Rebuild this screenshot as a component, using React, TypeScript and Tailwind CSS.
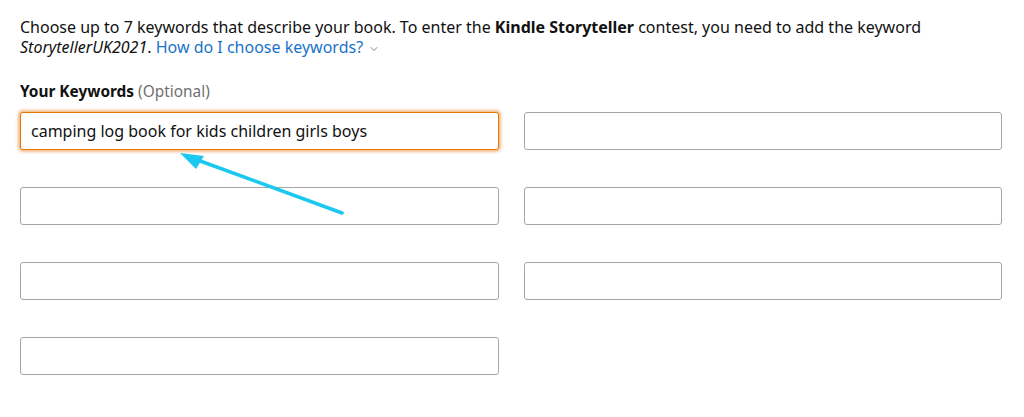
import { ChevronDown } from 'lucide-react';

const font = { fontFamily: '"Noto Sans", "Open Sans", Arial, sans-serif' };

function KeywordInput({ value, focused }: { value?: string; focused?: boolean }) {
  return (
    <input
      type="text"
      defaultValue={value}
      readOnly
      className={
        focused
          ? 'h-[38px] w-full rounded-[3px] border border-[#e77600] bg-white px-[10px] text-[16px] text-[#111] shadow-[0_0_3px_2px_rgba(228,121,17,0.5)] outline-none'
          : 'h-[38px] w-full rounded-[3px] border border-[#a6a6a6] bg-white px-[10px] text-[16px] text-[#111] outline-none'
      }
      style={font}
    />
  );
}

export default function App() {
  return (
    <div className="relative h-[417px] w-[1024px] overflow-hidden bg-white pl-[20px] pr-[22px] pt-[17px] text-[#111]" style={font}>
      <p className="text-[16px] leading-[20px]">
        Choose up to 7 keywords that describe your book. To enter the <b className="font-bold">Kindle Storyteller</b> contest, you
        need to add the keyword
        <br />
        <i>StorytellerUK2021</i>.{' '}
        <span className="text-[#1a73c8]">How do I choose keywords?</span>
        <ChevronDown size={12} strokeWidth={1.5} className="ml-[5px] inline-block align-middle text-[#555]" />
      </p>

      <div className="mt-[25px] mb-[10px] text-[15.4px] leading-[20px]">
        <span className="font-bold">Your Keywords</span> <span className="text-[#6f6f6f]">(Optional)</span>
      </div>

      <div className="grid grid-cols-2 gap-x-[25px] gap-y-[37px]">
        <KeywordInput value="camping log book for kids children girls boys" focused />
        <KeywordInput />
        <KeywordInput />
        <KeywordInput />
        <KeywordInput />
        <KeywordInput />
        <KeywordInput />
      </div>

      {/* annotation arrow drawn over the form */}
      <svg className="pointer-events-none absolute left-0 top-0" width="1024" height="417">
        <line x1="342" y1="213" x2="192" y2="158" stroke="#1ac8f0" strokeWidth="3.5" strokeLinecap="round" />
        <polygon points="180,153 204,156 196,169" fill="#1ac8f0" />
      </svg>
    </div>
  );
}
